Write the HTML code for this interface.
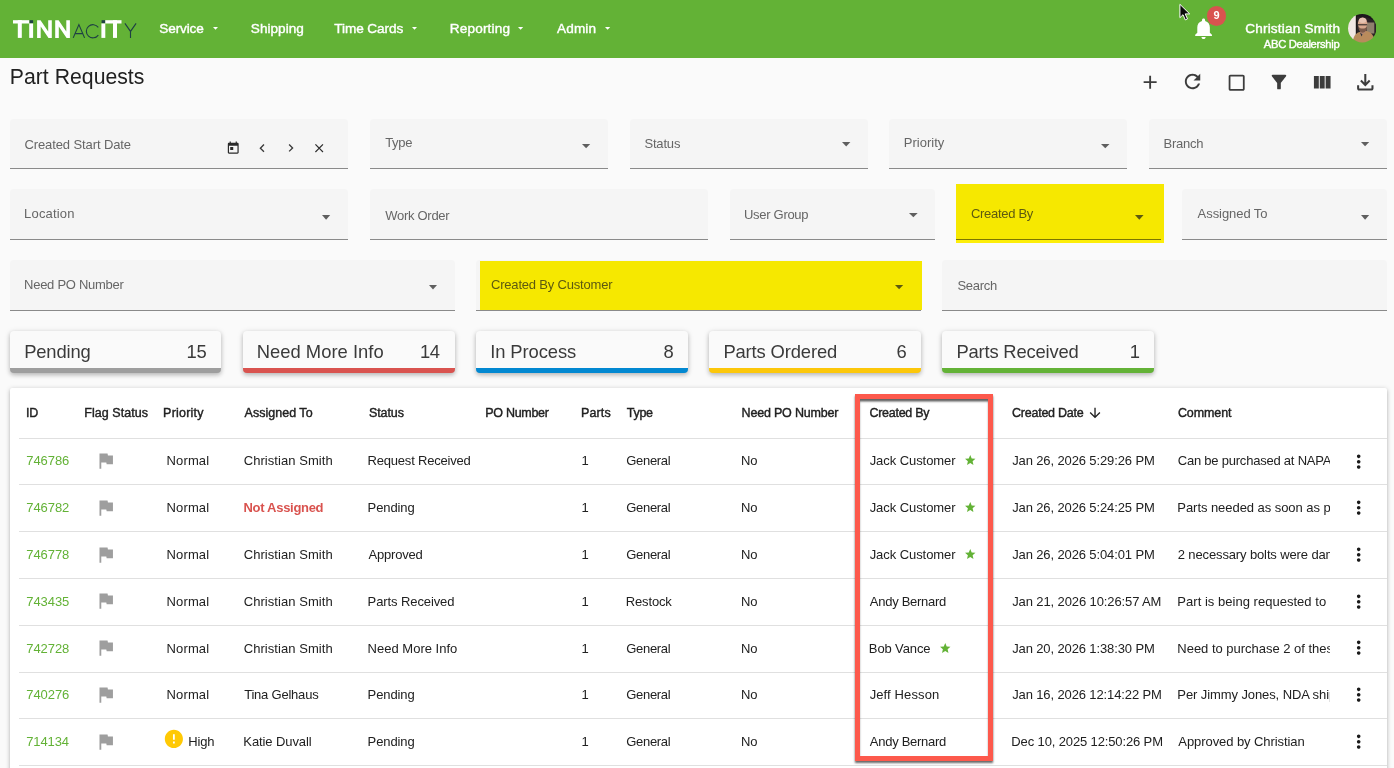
<!DOCTYPE html>
<html><head><meta charset="utf-8"><title>Part Requests</title>
<style>
html,body{margin:0;padding:0;}
body{width:1394px;height:768px;overflow:hidden;position:relative;background:#fafafa;font-family:"Liberation Sans",sans-serif;}
.b{position:absolute;display:block;}
.t{position:absolute;white-space:nowrap;line-height:20px;height:20px;}
</style></head><body>
<div class="b" style="left:0px;top:0px;width:1394px;height:58px;background:#63b236;"></div>
<svg class="b" style="left:0.00px;top:0.00px;" width="150.00" height="58.00" viewBox="0 0 150 58">
<g fill="#fff">
<rect x="13" y="20.2" width="16.3" height="3.3"/><rect x="17.8" y="20.2" width="4" height="17.7"/>
<rect x="29.2" y="23.4" width="3.9" height="14.5"/>
<path d="M37.1 37.9V20.2h3.4l7.7 11.3V20.2h3.6v17.7h-3.3l-7.8-11.4v11.4z"/>
<path d="M55.2 37.9V20.2h3.4l7.7 11.3V20.2h3.6v17.7h-3.3l-7.8-11.4v11.4z"/>
<rect x="101.4" y="23.4" width="3.9" height="14.5"/>
<rect x="105.2" y="20.2" width="16.3" height="3.3"/><rect x="113" y="20.2" width="4" height="17.7"/>
</g>
<g fill="#1f4044"><rect x="29.6" y="20.2" width="3.5" height="2.9"/><rect x="101.6" y="20.2" width="3.5" height="2.9"/></g>
<g fill="none" stroke="#1f4044" stroke-width="1.12" stroke-linecap="butt">
<path d="M73.2 37.9L78.9 24.6L84.6 37.9M75.3 33.6H82.5"/>
<path d="M98.3 27.4A6.6 6.6 0 1 0 98.3 35.1"/>
<path d="M124.9 23.4L130.5 31.4L136.1 23.4M130.5 31.4V37.9"/>
</g></svg>
<svg class="b" style="left:211.50px;top:26.00px;" width="7.00" height="6.00" viewBox="211.5 26 7.0 6"><path fill="#fff" d="M212.5 27L217.5 27L215.0 29.7Z"/></svg>
<svg class="b" style="left:410.75px;top:26.00px;" width="7.00" height="6.00" viewBox="410.75 26 7.0 6"><path fill="#fff" d="M411.75 27L416.75 27L414.25 29.7Z"/></svg>
<svg class="b" style="left:517.20px;top:26.00px;" width="7.20" height="6.00" viewBox="517.2 26 7.199999999999932 6"><path fill="#fff" d="M518.2 27L523.4 27L520.8 29.799999999999965Z"/></svg>
<svg class="b" style="left:603.50px;top:26.00px;" width="7.20" height="6.00" viewBox="603.5 26 7.2000000000000455 6"><path fill="#fff" d="M604.5 27L609.7 27L607.1 29.800000000000022Z"/></svg>
<svg class="b" style="left:1176.00px;top:0.00px;" width="20.00" height="26.00" viewBox="0 0 20 26"><path d="M3.9 4.3v13.4l3.1-3 2.3 5.2 2.2-1-2.3-5h4.5z" fill="#0a0a0a" stroke="#fff" stroke-width="1" stroke-linejoin="round"/></svg>
<svg class="b" style="left:1191.02px;top:16.16px;" width="25.15" height="25.15" viewBox="0 0 24 24"><path fill="#fff" d="M12 22c1.1 0 2-.9 2-2h-4c0 1.1.89 2 2 2zm6-6v-5c0-3.07-1.64-5.64-4.5-6.32V4c0-.83-.67-1.5-1.5-1.5s-1.5.67-1.5 1.5v.68C7.63 5.36 6 7.92 6 11v5l-2 2v1h16v-1l-2-2z"/></svg>
<div class="b" style="left:1206.7px;top:6.2px;width:19.5px;height:19.5px;border-radius:50%;background:#d9534f;"></div>
<svg class="b" style="left:1347.65px;top:14.20px;" width="28.50" height="28.50" viewBox="0 0 28.5 28.5"><defs><clipPath id="avc"><circle cx="14.25" cy="14.25" r="14.2"/></clipPath>
<filter id="avb" x="-10%" y="-10%" width="120%" height="120%"><feGaussianBlur stdDeviation="0.55"/></filter></defs>
<g clip-path="url(#avc)"><g filter="url(#avb)">
<rect x="-2" y="-2" width="33" height="33" fill="#2b2326"/>
<rect x="-2" y="-2" width="10.300" height="33" fill="#f1e7e3"/>
<rect x="7.800" y="-2" width="1.200" height="33" fill="#1c1618"/>
<rect x="18.500" y="8.500" width="7.800" height="11" fill="#8f7f6c"/>
<path d="M8 -1L30 -1L30 8L19 3.500L9 2.500z" fill="#1d181b"/>
<path d="M4.800 30C4.800 22.500 7.500 19 12.500 17.800L17.500 16.800C23 18 26.600 21 27 30z" fill="#b98b5c"/>
<path d="M11.300 16.500L13.500 22.500L15.500 18.500z" fill="#2a3040"/>
<path d="M12 14h5.500v4.500l-2.700 2.200-2.800-2.200z" fill="#b5866e"/>
<ellipse cx="14.600" cy="9.900" rx="4.700" ry="6.300" fill="#d7a68d"/>
<ellipse cx="14.600" cy="6.300" rx="3.800" ry="2.600" fill="#e6c3b2"/>
<path d="M10.300 12.500c.2 4 2 6.200 4.300 6.200s4.200-2.200 4.400-6.200c-1.300 1.600-2.700 2.100-4.400 2.100s-3-.5-4.300-2.100z" fill="#7b5a4b"/>
<rect x="10" y="10.200" width="9.200" height="1.150" fill="#3a2e2c"/>
</g></g></svg>
<svg class="b" style="left:1138.56px;top:70.96px;" width="22.29" height="22.29" viewBox="0 0 24 24"><path fill="#3c3c3c" d="M19 13h-6v6h-2v-6H5v-2h6V5h2v6h6v2z"/></svg>
<svg class="b" style="left:1181.15px;top:70.35px;" width="23.10" height="23.10" viewBox="0 0 24 24"><path fill="#3c3c3c" d="M17.65 6.35C16.2 4.9 14.21 4 12 4c-4.42 0-7.99 3.58-7.99 8s3.57 8 7.99 8c3.73 0 6.84-2.55 7.73-6h-2.08c-.82 2.33-3.04 4-5.65 4-3.31 0-6-2.69-6-6s2.69-6 6-6c1.66 0 3.14.69 4.22 1.78L13 11h7V4l-2.35 2.35z"/></svg>
<svg class="b" style="left:1225.63px;top:71.73px;" width="21.33" height="21.33" viewBox="0 0 24 24"><path fill="#3c3c3c" d="M19 5v14H5V5h14m0-2H5c-1.1 0-2 .9-2 2v14c0 1.1.9 2 2 2h14c1.1 0 2-.9 2-2V5c0-1.1-.9-2-2-2z"/></svg>
<svg class="b" style="left:1268.01px;top:71.16px;" width="21.97" height="21.97" viewBox="0 0 24 24"><path fill="#3c3c3c" d="M4.25 5.61C6.27 8.2 10 13 10 13v6c0 .55.45 1 1 1h2c.55 0 1-.45 1-1v-6s3.72-4.8 5.74-7.39c.51-.66.04-1.61-.79-1.61H5.04c-.83 0-1.3.95-.79 1.61z"/></svg>
<svg class="b" style="left:1310.17px;top:71.24px;" width="23.49" height="23.49" viewBox="0 0 24 24"><path fill="#3c3c3c" d="M10 18h5V5h-5v13zm-6 0h5V5H4v13zM16 5v13h5V5h-5z"/></svg>
<svg class="b" style="left:1353.20px;top:69.80px;" width="24.60" height="24.60" viewBox="0 0 24 24"><path fill="#3c3c3c" d="M18 15v3H6v-3H4v3c0 1.1.9 2 2 2h12c1.1 0 2-.9 2-2v-3h-2zm-1-4l-1.41-1.41L13 12.17V4h-2v8.17L8.41 9.59 7 11l5 5 5-5z"/></svg>
<div class="b" style="left:10px;top:119px;width:338px;height:50px;background:#f5f5f5;border-radius:4px 4px 0 0;border-bottom:1px solid #8a8a8a;box-sizing:border-box;"></div>
<div class="b" style="left:370px;top:119px;width:238px;height:50px;background:#f5f5f5;border-radius:4px 4px 0 0;border-bottom:1px solid #8a8a8a;box-sizing:border-box;"></div>
<div class="b" style="left:630px;top:119px;width:238px;height:50px;background:#f5f5f5;border-radius:4px 4px 0 0;border-bottom:1px solid #8a8a8a;box-sizing:border-box;"></div>
<div class="b" style="left:889px;top:119px;width:238px;height:50px;background:#f5f5f5;border-radius:4px 4px 0 0;border-bottom:1px solid #8a8a8a;box-sizing:border-box;"></div>
<div class="b" style="left:1149px;top:119px;width:238px;height:50px;background:#f5f5f5;border-radius:4px 4px 0 0;border-bottom:1px solid #8a8a8a;box-sizing:border-box;"></div>
<div class="b" style="left:10px;top:189px;width:338px;height:51px;background:#f5f5f5;border-radius:4px 4px 0 0;border-bottom:1px solid #8a8a8a;box-sizing:border-box;"></div>
<div class="b" style="left:370px;top:189px;width:338px;height:51px;background:#f5f5f5;border-radius:4px 4px 0 0;border-bottom:1px solid #8a8a8a;box-sizing:border-box;"></div>
<div class="b" style="left:730px;top:189px;width:205px;height:51px;background:#f5f5f5;border-radius:4px 4px 0 0;border-bottom:1px solid #8a8a8a;box-sizing:border-box;"></div>
<div class="b" style="left:956px;top:184px;width:208px;height:59px;background:#f6e800;"></div>
<div class="b" style="left:956px;top:239px;width:205px;height:1px;background:#7c7500;"></div>
<div class="b" style="left:956px;top:240px;width:208px;height:3px;background:#fdee0a;"></div>
<div class="b" style="left:1182px;top:189px;width:205px;height:51px;background:#f5f5f5;border-radius:4px 4px 0 0;border-bottom:1px solid #8a8a8a;box-sizing:border-box;"></div>
<div class="b" style="left:10px;top:260px;width:445px;height:51px;background:#f5f5f5;border-radius:4px 4px 0 0;border-bottom:1px solid #8a8a8a;box-sizing:border-box;"></div>
<div class="b" style="left:476px;top:260px;width:445px;height:51px;background:#f5f5f5;border-radius:4px 4px 0 0;border-bottom:1px solid #8a8a8a;box-sizing:border-box;"></div>
<div class="b" style="left:480px;top:261px;width:442px;height:49px;background:#f6e800;"></div>
<div class="b" style="left:942px;top:260px;width:445px;height:51px;background:#f5f5f5;border-radius:4px 4px 0 0;border-bottom:1px solid #8a8a8a;box-sizing:border-box;"></div>
<svg class="b" style="left:225.76px;top:140.62px;" width="14.47" height="14.47" viewBox="0 0 24 24"><path fill="#2a2a2a" d="M19 3h-1V1h-2v2H8V1H6v2H5c-1.11 0-1.99.9-1.99 2L3 19c0 1.1.89 2 2 2h14c1.1 0 2-.9 2-2V5c0-1.1-.9-2-2-2zm0 16H5V8h14v11zM7 10h5v5H7z"/></svg>
<svg class="b" style="left:253.91px;top:139.91px;" width="16.28" height="16.28" viewBox="0 0 24 24"><path fill="#3a3a3a" d="M15.41 7.41L14 6l-6 6 6 6 1.41-1.41L10.83 12z"/></svg>
<svg class="b" style="left:283.21px;top:140.15px;" width="15.80" height="15.80" viewBox="0 0 24 24"><path fill="#3a3a3a" d="M10 6L8.59 7.41 13.17 12l-4.58 4.59L10 18l6-6z"/></svg>
<svg class="b" style="left:312.00px;top:140.70px;" width="14.40" height="14.40" viewBox="0 0 24 24"><path fill="#2e2e2e" d="M19 6.41L17.59 5 12 10.59 6.41 5 5 6.41 10.59 12 5 17.59 6.41 19 12 13.41 17.59 19 19 17.59 13.41 12z"/></svg>
<svg class="b" style="left:580.80px;top:142.80px;" width="10.20" height="6.20" viewBox="580.8 142.8 10.200000000000045 6.199999999999989"><path fill="#5f5f5f" d="M581.8 143.8H590L585.9 148Z"/></svg>
<svg class="b" style="left:840.80px;top:140.80px;" width="10.40" height="6.40" viewBox="840.8 140.8 10.400000000000091 6.399999999999977"><path fill="#5f5f5f" d="M841.8 141.8H850.2L846.0 146.2Z"/></svg>
<svg class="b" style="left:1100.00px;top:142.80px;" width="10.50" height="6.20" viewBox="1100 142.8 10.5 6.199999999999989"><path fill="#5f5f5f" d="M1101 143.8H1109.5L1105.25 148Z"/></svg>
<svg class="b" style="left:1359.80px;top:141.00px;" width="10.20" height="6.20" viewBox="1359.8 141 10.200000000000045 6.199999999999989"><path fill="#5f5f5f" d="M1360.8 142H1369L1364.9 146.2Z"/></svg>
<svg class="b" style="left:320.80px;top:213.80px;" width="10.20" height="6.70" viewBox="320.8 213.8 10.199999999999989 6.699999999999989"><path fill="#5f5f5f" d="M321.8 214.8H330L325.9 219.5Z"/></svg>
<svg class="b" style="left:907.50px;top:212.00px;" width="10.70" height="6.30" viewBox="907.5 212 10.700000000000045 6.300000000000011"><path fill="#5f5f5f" d="M908.5 213H917.2L912.85 217.3Z"/></svg>
<svg class="b" style="left:1133.60px;top:213.80px;" width="10.60" height="6.70" viewBox="1133.6 213.8 10.600000000000136 6.699999999999989"><path fill="#5d5a10" d="M1134.6 214.8H1143.2L1138.9 219.5Z"/></svg>
<svg class="b" style="left:1359.80px;top:213.80px;" width="10.20" height="6.70" viewBox="1359.8 213.8 10.200000000000045 6.699999999999989"><path fill="#5f5f5f" d="M1360.8 214.8H1369L1364.9 219.5Z"/></svg>
<svg class="b" style="left:428.30px;top:283.50px;" width="10.00" height="6.50" viewBox="428.3 283.5 10.0 6.5"><path fill="#5f5f5f" d="M429.3 284.5H437.3L433.3 289Z"/></svg>
<svg class="b" style="left:893.80px;top:283.80px;" width="10.20" height="6.20" viewBox="893.8 283.8 10.200000000000045 6.199999999999989"><path fill="#5d5a10" d="M894.8 284.8H903L898.9 289Z"/></svg>
<div class="b" style="left:10px;top:331px;width:211px;height:41.5px;background:#fafafa;border-radius:4px;border-bottom:5px solid #9e9e9e;box-sizing:border-box;box-shadow:0 2px 4px rgba(0,0,0,.2),0 1px 6px rgba(0,0,0,.12);"></div>
<div class="b" style="left:243px;top:331px;width:212px;height:41.5px;background:#fafafa;border-radius:4px;border-bottom:5px solid #d9534f;box-sizing:border-box;box-shadow:0 2px 4px rgba(0,0,0,.2),0 1px 6px rgba(0,0,0,.12);"></div>
<div class="b" style="left:476px;top:331px;width:212px;height:41.5px;background:#fafafa;border-radius:4px;border-bottom:5px solid #0288d1;box-sizing:border-box;box-shadow:0 2px 4px rgba(0,0,0,.2),0 1px 6px rgba(0,0,0,.12);"></div>
<div class="b" style="left:709px;top:331px;width:212px;height:41.5px;background:#fafafa;border-radius:4px;border-bottom:5px solid #fcc70a;box-sizing:border-box;box-shadow:0 2px 4px rgba(0,0,0,.2),0 1px 6px rgba(0,0,0,.12);"></div>
<div class="b" style="left:942px;top:331px;width:212px;height:41.5px;background:#fafafa;border-radius:4px;border-bottom:5px solid #63b236;box-sizing:border-box;box-shadow:0 2px 4px rgba(0,0,0,.2),0 1px 6px rgba(0,0,0,.12);"></div>
<div class="b" style="left:10px;top:388px;width:1377px;height:412px;background:#fff;border-radius:2px 2px 0 0;box-shadow:0 1px 5px rgba(0,0,0,.22),0 2px 3px rgba(0,0,0,.12);"></div>
<div class="b" style="left:19px;top:438px;width:1368px;height:1px;background:#e0e0e0;"></div>
<div class="b" style="left:19px;top:484px;width:1368px;height:1px;background:#e0e0e0;"></div>
<div class="b" style="left:19px;top:531px;width:1368px;height:1px;background:#e0e0e0;"></div>
<div class="b" style="left:19px;top:578px;width:1368px;height:1px;background:#e0e0e0;"></div>
<div class="b" style="left:19px;top:625px;width:1368px;height:1px;background:#e0e0e0;"></div>
<div class="b" style="left:19px;top:672px;width:1368px;height:1px;background:#e0e0e0;"></div>
<div class="b" style="left:19px;top:718px;width:1368px;height:1px;background:#e0e0e0;"></div>
<div class="b" style="left:19px;top:765px;width:1368px;height:1px;background:#e0e0e0;"></div>
<svg class="b" style="left:1087.27px;top:404.78px;" width="16.05" height="16.05" viewBox="0 0 24 24"><path fill="#212121" d="M20 12l-1.41-1.41L13 16.17V4h-2v12.17l-5.58-5.59L4 12l8 8 8-8z"/></svg>
<svg class="b" style="left:94.88px;top:450.43px;" width="21.54" height="21.54" viewBox="0 0 24 24"><path fill="#9e9e9e" d="M14.4 6L14 4H5v17h2v-7h5.6l.4 2h7V6z"/></svg>
<svg class="b" style="left:1347.85px;top:450.60px;" width="21.40" height="21.40" viewBox="0 0 24 24"><path fill="#1a1a1a" d="M12 8c1.1 0 2-.9 2-2s-.9-2-2-2-2 .9-2 2 .9 2 2 2zm0 2c-1.1 0-2 .9-2 2s.9 2 2 2 2-.9 2-2-.9-2-2-2zm0 6c-1.1 0-2 .9-2 2s.9 2 2 2 2-.9 2-2-.9-2-2-2z"/></svg>
<svg class="b" style="left:964.31px;top:454.32px;" width="12.49" height="12.49" viewBox="0 0 24 24"><path fill="#63b236" d="M12 17.27L18.18 21l-1.64-7.03L22 9.24l-7.19-.61L12 2 9.19 8.63 2 9.24l5.46 4.73L5.82 21z"/></svg>
<svg class="b" style="left:94.88px;top:497.11px;" width="21.54" height="21.54" viewBox="0 0 24 24"><path fill="#9e9e9e" d="M14.4 6L14 4H5v17h2v-7h5.6l.4 2h7V6z"/></svg>
<svg class="b" style="left:1347.85px;top:497.28px;" width="21.40" height="21.40" viewBox="0 0 24 24"><path fill="#1a1a1a" d="M12 8c1.1 0 2-.9 2-2s-.9-2-2-2-2 .9-2 2 .9 2 2 2zm0 2c-1.1 0-2 .9-2 2s.9 2 2 2 2-.9 2-2-.9-2-2-2zm0 6c-1.1 0-2 .9-2 2s.9 2 2 2 2-.9 2-2-.9-2-2-2z"/></svg>
<svg class="b" style="left:964.31px;top:501.32px;" width="12.49" height="12.49" viewBox="0 0 24 24"><path fill="#63b236" d="M12 17.27L18.18 21l-1.64-7.03L22 9.24l-7.19-.61L12 2 9.19 8.63 2 9.24l5.46 4.73L5.82 21z"/></svg>
<svg class="b" style="left:94.88px;top:543.79px;" width="21.54" height="21.54" viewBox="0 0 24 24"><path fill="#9e9e9e" d="M14.4 6L14 4H5v17h2v-7h5.6l.4 2h7V6z"/></svg>
<svg class="b" style="left:1347.85px;top:543.96px;" width="21.40" height="21.40" viewBox="0 0 24 24"><path fill="#1a1a1a" d="M12 8c1.1 0 2-.9 2-2s-.9-2-2-2-2 .9-2 2 .9 2 2 2zm0 2c-1.1 0-2 .9-2 2s.9 2 2 2 2-.9 2-2-.9-2-2-2zm0 6c-1.1 0-2 .9-2 2s.9 2 2 2 2-.9 2-2-.9-2-2-2z"/></svg>
<svg class="b" style="left:964.31px;top:548.32px;" width="12.49" height="12.49" viewBox="0 0 24 24"><path fill="#63b236" d="M12 17.27L18.18 21l-1.64-7.03L22 9.24l-7.19-.61L12 2 9.19 8.63 2 9.24l5.46 4.73L5.82 21z"/></svg>
<svg class="b" style="left:94.88px;top:590.47px;" width="21.54" height="21.54" viewBox="0 0 24 24"><path fill="#9e9e9e" d="M14.4 6L14 4H5v17h2v-7h5.6l.4 2h7V6z"/></svg>
<svg class="b" style="left:1347.85px;top:590.64px;" width="21.40" height="21.40" viewBox="0 0 24 24"><path fill="#1a1a1a" d="M12 8c1.1 0 2-.9 2-2s-.9-2-2-2-2 .9-2 2 .9 2 2 2zm0 2c-1.1 0-2 .9-2 2s.9 2 2 2 2-.9 2-2-.9-2-2-2zm0 6c-1.1 0-2 .9-2 2s.9 2 2 2 2-.9 2-2-.9-2-2-2z"/></svg>
<svg class="b" style="left:94.88px;top:637.15px;" width="21.54" height="21.54" viewBox="0 0 24 24"><path fill="#9e9e9e" d="M14.4 6L14 4H5v17h2v-7h5.6l.4 2h7V6z"/></svg>
<svg class="b" style="left:1347.85px;top:637.32px;" width="21.40" height="21.40" viewBox="0 0 24 24"><path fill="#1a1a1a" d="M12 8c1.1 0 2-.9 2-2s-.9-2-2-2-2 .9-2 2 .9 2 2 2zm0 2c-1.1 0-2 .9-2 2s.9 2 2 2 2-.9 2-2-.9-2-2-2zm0 6c-1.1 0-2 .9-2 2s.9 2 2 2 2-.9 2-2-.9-2-2-2z"/></svg>
<svg class="b" style="left:938.81px;top:642.32px;" width="12.49" height="12.49" viewBox="0 0 24 24"><path fill="#63b236" d="M12 17.27L18.18 21l-1.64-7.03L22 9.24l-7.19-.61L12 2 9.19 8.63 2 9.24l5.46 4.73L5.82 21z"/></svg>
<svg class="b" style="left:94.88px;top:683.83px;" width="21.54" height="21.54" viewBox="0 0 24 24"><path fill="#9e9e9e" d="M14.4 6L14 4H5v17h2v-7h5.6l.4 2h7V6z"/></svg>
<svg class="b" style="left:1347.85px;top:684.00px;" width="21.40" height="21.40" viewBox="0 0 24 24"><path fill="#1a1a1a" d="M12 8c1.1 0 2-.9 2-2s-.9-2-2-2-2 .9-2 2 .9 2 2 2zm0 2c-1.1 0-2 .9-2 2s.9 2 2 2 2-.9 2-2-.9-2-2-2zm0 6c-1.1 0-2 .9-2 2s.9 2 2 2 2-.9 2-2-.9-2-2-2z"/></svg>
<svg class="b" style="left:94.88px;top:730.51px;" width="21.54" height="21.54" viewBox="0 0 24 24"><path fill="#9e9e9e" d="M14.4 6L14 4H5v17h2v-7h5.6l.4 2h7V6z"/></svg>
<svg class="b" style="left:1347.85px;top:730.68px;" width="21.40" height="21.40" viewBox="0 0 24 24"><path fill="#1a1a1a" d="M12 8c1.1 0 2-.9 2-2s-.9-2-2-2-2 .9-2 2 .9 2 2 2zm0 2c-1.1 0-2 .9-2 2s.9 2 2 2 2-.9 2-2-.9-2-2-2zm0 6c-1.1 0-2 .9-2 2s.9 2 2 2 2-.9 2-2-.9-2-2-2z"/></svg>
<svg class="b" style="left:162.96px;top:728.21px;" width="21.78" height="21.78" viewBox="0 0 24 24"><path fill="#ffc905" d="M12 2C6.48 2 2 6.48 2 12s4.48 10 10 10 10-4.48 10-10S17.52 2 12 2zm1 15h-2v-2h2v2zm0-4h-2V7h2v6z"/></svg>
<div class="b" style="left:0;top:0;width:1394px;height:768px;will-change:transform;">
<div class="t" style="left:159.37px;top:19.00px;font-size:13.6px;letter-spacing:-0.145px;color:#fff;-webkit-text-stroke:0.4px #fff;">Service</div>
<div class="t" style="left:250.87px;top:19.00px;font-size:13.6px;letter-spacing:0.001px;color:#fff;-webkit-text-stroke:0.4px #fff;">Shipping</div>
<div class="t" style="left:334.34px;top:19.00px;font-size:13.6px;letter-spacing:-0.098px;color:#fff;-webkit-text-stroke:0.4px #fff;">Time Cards</div>
<div class="t" style="left:449.74px;top:19.00px;font-size:13.6px;letter-spacing:0.170px;color:#fff;-webkit-text-stroke:0.4px #fff;">Reporting</div>
<div class="t" style="left:557.05px;top:19.00px;font-size:13.6px;letter-spacing:0.116px;color:#fff;-webkit-text-stroke:0.4px #fff;">Admin</div>
<div class="t" style="left:1245.16px;top:19.00px;font-size:13.6px;letter-spacing:0.193px;color:#fff;-webkit-text-stroke:0.4px #fff;">Christian Smith</div>
<div class="t" style="left:1263.80px;top:34.00px;font-size:11.2px;letter-spacing:-0.287px;color:#fff;-webkit-text-stroke:0.4px #fff;">ABC Dealership</div>
<div class="t" style="left:1213.46px;top:5.00px;font-size:11px;letter-spacing:0.000px;color:#fff;font-weight:bold;">9</div>
<div class="t" style="left:9.84px;top:67.00px;font-size:21.2px;letter-spacing:0.024px;color:#212121;">Part Requests</div>
<div class="t" style="left:24.49px;top:135.00px;font-size:13px;letter-spacing:-0.109px;color:#666666;">Created Start Date</div>
<div class="t" style="left:385.15px;top:133.00px;font-size:13px;letter-spacing:-0.300px;color:#666666;">Type</div>
<div class="t" style="left:644.44px;top:134.00px;font-size:13px;letter-spacing:-0.178px;color:#666666;">Status</div>
<div class="t" style="left:903.83px;top:133.00px;font-size:13px;letter-spacing:-0.005px;color:#666666;">Priority</div>
<div class="t" style="left:1163.58px;top:134.00px;font-size:13px;letter-spacing:-0.259px;color:#666666;">Branch</div>
<div class="t" style="left:24.08px;top:204.00px;font-size:13px;letter-spacing:0.178px;color:#666666;">Location</div>
<div class="t" style="left:385.35px;top:206.00px;font-size:13px;letter-spacing:-0.300px;color:#666666;">Work Order</div>
<div class="t" style="left:744.04px;top:205.00px;font-size:13px;letter-spacing:-0.300px;color:#666666;">User Group</div>
<div class="t" style="left:970.99px;top:204.00px;font-size:13px;letter-spacing:-0.300px;color:#5d5a10;">Created By</div>
<div class="t" style="left:1197.60px;top:204.00px;font-size:13px;letter-spacing:-0.064px;color:#666666;">Assigned To</div>
<div class="t" style="left:24.08px;top:275.00px;font-size:13px;letter-spacing:-0.276px;color:#666666;">Need PO Number</div>
<div class="t" style="left:490.99px;top:275.00px;font-size:13px;letter-spacing:-0.190px;color:#5d5a10;">Created By Customer</div>
<div class="t" style="left:957.44px;top:276.00px;font-size:13px;letter-spacing:-0.300px;color:#666666;">Search</div>
<div class="t" style="left:24.16px;top:342.00px;font-size:18.4px;letter-spacing:-0.143px;color:#3a3a3a;">Pending</div>
<div class="t" style="left:186.45px;top:342.00px;font-size:18.4px;letter-spacing:-0.171px;color:#3a3a3a;">15</div>
<div class="t" style="left:256.66px;top:342.00px;font-size:18.4px;letter-spacing:0.020px;color:#3a3a3a;">Need More Info</div>
<div class="t" style="left:419.95px;top:342.00px;font-size:18.4px;letter-spacing:-0.300px;color:#3a3a3a;">14</div>
<div class="t" style="left:490.16px;top:342.00px;font-size:18.4px;letter-spacing:-0.085px;color:#3a3a3a;">In Process</div>
<div class="t" style="left:663.53px;top:342.00px;font-size:18.4px;letter-spacing:0.000px;color:#3a3a3a;">8</div>
<div class="t" style="left:723.41px;top:342.00px;font-size:18.4px;letter-spacing:-0.141px;color:#3a3a3a;">Parts Ordered</div>
<div class="t" style="left:896.49px;top:342.00px;font-size:18.4px;letter-spacing:0.000px;color:#3a3a3a;">6</div>
<div class="t" style="left:956.41px;top:342.00px;font-size:18.4px;letter-spacing:-0.184px;color:#3a3a3a;">Parts Received</div>
<div class="t" style="left:1129.70px;top:342.00px;font-size:18.4px;letter-spacing:0.000px;color:#3a3a3a;">1</div>
<div class="t" style="left:26.07px;top:403.00px;font-size:12.5px;letter-spacing:-0.300px;color:#212121;-webkit-text-stroke:0.4px #212121;">ID</div>
<div class="t" style="left:84.32px;top:403.00px;font-size:12.5px;letter-spacing:0.039px;color:#212121;-webkit-text-stroke:0.4px #212121;">Flag Status</div>
<div class="t" style="left:163.07px;top:403.00px;font-size:12.5px;letter-spacing:0.226px;color:#212121;-webkit-text-stroke:0.4px #212121;">Priority</div>
<div class="t" style="left:244.55px;top:403.00px;font-size:12.5px;letter-spacing:0.016px;color:#212121;-webkit-text-stroke:0.4px #212121;">Assigned To</div>
<div class="t" style="left:368.91px;top:403.00px;font-size:12.5px;letter-spacing:-0.081px;color:#212121;-webkit-text-stroke:0.4px #212121;">Status</div>
<div class="t" style="left:485.32px;top:403.00px;font-size:12.5px;letter-spacing:-0.300px;color:#212121;-webkit-text-stroke:0.4px #212121;">PO Number</div>
<div class="t" style="left:581.07px;top:403.00px;font-size:12.5px;letter-spacing:0.111px;color:#212121;-webkit-text-stroke:0.4px #212121;">Parts</div>
<div class="t" style="left:626.85px;top:403.00px;font-size:12.5px;letter-spacing:-0.300px;color:#212121;-webkit-text-stroke:0.4px #212121;">Type</div>
<div class="t" style="left:741.57px;top:403.00px;font-size:12.5px;letter-spacing:-0.197px;color:#212121;-webkit-text-stroke:0.4px #212121;">Need PO Number</div>
<div class="t" style="left:869.46px;top:403.00px;font-size:12.5px;letter-spacing:-0.272px;color:#212121;-webkit-text-stroke:0.4px #212121;">Created By</div>
<div class="t" style="left:1011.96px;top:403.00px;font-size:12.5px;letter-spacing:-0.228px;color:#212121;-webkit-text-stroke:0.4px #212121;">Created Date</div>
<div class="t" style="left:1177.96px;top:403.00px;font-size:12.5px;letter-spacing:-0.106px;color:#212121;-webkit-text-stroke:0.4px #212121;">Comment</div>
<div class="t" style="left:26.24px;top:451.00px;font-size:13px;letter-spacing:-0.069px;color:#63b236;">746786</div>
<div class="t" style="left:166.58px;top:451.00px;font-size:13px;letter-spacing:0.126px;color:#212121;">Normal</div>
<div class="t" style="left:243.74px;top:451.00px;font-size:13px;letter-spacing:0.061px;color:#212121;">Christian Smith</div>
<div class="t" style="left:367.58px;top:451.00px;font-size:13px;letter-spacing:-0.205px;color:#212121;">Request Received</div>
<div class="t" style="left:581.54px;top:451.00px;font-size:13px;letter-spacing:0.000px;color:#212121;">1</div>
<div class="t" style="left:626.24px;top:451.00px;font-size:13px;letter-spacing:-0.300px;color:#212121;">General</div>
<div class="t" style="left:741.08px;top:451.00px;font-size:13px;letter-spacing:-0.300px;color:#212121;">No</div>
<div class="t" style="left:869.65px;top:451.00px;font-size:13px;letter-spacing:-0.064px;color:#212121;">Jack Customer</div>
<div class="t" style="left:1012.15px;top:451.00px;font-size:13px;letter-spacing:-0.120px;color:#212121;">Jan 26, 2026 5:29:26 PM</div>
<div class="t" style="left:1177.74px;top:451.00px;font-size:13px;letter-spacing:-0.220px;color:#212121;width:152.06px;overflow:hidden;">Can be purchased at NAPA Auto Parts</div>
<div class="t" style="left:26.24px;top:498.00px;font-size:13px;letter-spacing:-0.069px;color:#63b236;">746782</div>
<div class="t" style="left:166.58px;top:498.00px;font-size:13px;letter-spacing:0.126px;color:#212121;">Normal</div>
<div class="t" style="left:243.54px;top:498.00px;font-size:13px;letter-spacing:-0.300px;color:#d9534f;font-weight:bold;">Not Assigned</div>
<div class="t" style="left:367.58px;top:498.00px;font-size:13px;letter-spacing:-0.111px;color:#212121;">Pending</div>
<div class="t" style="left:581.54px;top:498.00px;font-size:13px;letter-spacing:0.000px;color:#212121;">1</div>
<div class="t" style="left:626.24px;top:498.00px;font-size:13px;letter-spacing:-0.300px;color:#212121;">General</div>
<div class="t" style="left:741.08px;top:498.00px;font-size:13px;letter-spacing:-0.300px;color:#212121;">No</div>
<div class="t" style="left:869.65px;top:498.00px;font-size:13px;letter-spacing:-0.064px;color:#212121;">Jack Customer</div>
<div class="t" style="left:1012.15px;top:498.00px;font-size:13px;letter-spacing:-0.120px;color:#212121;">Jan 26, 2026 5:24:25 PM</div>
<div class="t" style="left:1177.33px;top:498.00px;font-size:13px;letter-spacing:-0.057px;color:#212121;width:152.47px;overflow:hidden;">Parts needed as soon as possible</div>
<div class="t" style="left:26.24px;top:545.00px;font-size:13px;letter-spacing:-0.069px;color:#63b236;">746778</div>
<div class="t" style="left:166.58px;top:545.00px;font-size:13px;letter-spacing:0.126px;color:#212121;">Normal</div>
<div class="t" style="left:243.74px;top:545.00px;font-size:13px;letter-spacing:0.061px;color:#212121;">Christian Smith</div>
<div class="t" style="left:368.60px;top:545.00px;font-size:13px;letter-spacing:-0.217px;color:#212121;">Approved</div>
<div class="t" style="left:581.54px;top:545.00px;font-size:13px;letter-spacing:0.000px;color:#212121;">1</div>
<div class="t" style="left:626.24px;top:545.00px;font-size:13px;letter-spacing:-0.300px;color:#212121;">General</div>
<div class="t" style="left:741.08px;top:545.00px;font-size:13px;letter-spacing:-0.300px;color:#212121;">No</div>
<div class="t" style="left:869.65px;top:545.00px;font-size:13px;letter-spacing:-0.064px;color:#212121;">Jack Customer</div>
<div class="t" style="left:1012.15px;top:545.00px;font-size:13px;letter-spacing:-0.120px;color:#212121;">Jan 26, 2026 5:04:01 PM</div>
<div class="t" style="left:1177.74px;top:545.00px;font-size:13px;letter-spacing:-0.127px;color:#212121;width:152.06px;overflow:hidden;">2 necessary bolts were damaged</div>
<div class="t" style="left:26.24px;top:592.00px;font-size:13px;letter-spacing:-0.069px;color:#63b236;">743435</div>
<div class="t" style="left:166.58px;top:592.00px;font-size:13px;letter-spacing:0.126px;color:#212121;">Normal</div>
<div class="t" style="left:243.74px;top:592.00px;font-size:13px;letter-spacing:0.061px;color:#212121;">Christian Smith</div>
<div class="t" style="left:367.58px;top:592.00px;font-size:13px;letter-spacing:-0.096px;color:#212121;">Parts Received</div>
<div class="t" style="left:581.54px;top:592.00px;font-size:13px;letter-spacing:0.000px;color:#212121;">1</div>
<div class="t" style="left:625.83px;top:592.00px;font-size:13px;letter-spacing:-0.166px;color:#212121;">Restock</div>
<div class="t" style="left:741.08px;top:592.00px;font-size:13px;letter-spacing:-0.300px;color:#212121;">No</div>
<div class="t" style="left:869.85px;top:592.00px;font-size:13px;letter-spacing:-0.283px;color:#212121;">Andy Bernard</div>
<div class="t" style="left:1012.15px;top:592.00px;font-size:13px;letter-spacing:-0.108px;color:#212121;">Jan 21, 2026 10:26:57 AM</div>
<div class="t" style="left:1177.33px;top:592.00px;font-size:13px;letter-spacing:0.026px;color:#212121;width:152.47px;overflow:hidden;">Part is being requested to</div>
<div class="t" style="left:26.24px;top:639.00px;font-size:13px;letter-spacing:-0.069px;color:#63b236;">742728</div>
<div class="t" style="left:166.58px;top:639.00px;font-size:13px;letter-spacing:0.126px;color:#212121;">Normal</div>
<div class="t" style="left:243.74px;top:639.00px;font-size:13px;letter-spacing:0.061px;color:#212121;">Christian Smith</div>
<div class="t" style="left:367.58px;top:639.00px;font-size:13px;letter-spacing:0.007px;color:#212121;">Need More Info</div>
<div class="t" style="left:581.54px;top:639.00px;font-size:13px;letter-spacing:0.000px;color:#212121;">1</div>
<div class="t" style="left:626.24px;top:639.00px;font-size:13px;letter-spacing:-0.300px;color:#212121;">General</div>
<div class="t" style="left:741.08px;top:639.00px;font-size:13px;letter-spacing:-0.300px;color:#212121;">No</div>
<div class="t" style="left:868.83px;top:639.00px;font-size:13px;letter-spacing:-0.118px;color:#212121;">Bob Vance</div>
<div class="t" style="left:1012.15px;top:639.00px;font-size:13px;letter-spacing:-0.120px;color:#212121;">Jan 20, 2026 1:38:30 PM</div>
<div class="t" style="left:1177.33px;top:639.00px;font-size:13px;letter-spacing:-0.021px;color:#212121;width:152.47px;overflow:hidden;">Need to purchase 2 of these</div>
<div class="t" style="left:26.24px;top:685.00px;font-size:13px;letter-spacing:-0.069px;color:#63b236;">740276</div>
<div class="t" style="left:166.58px;top:685.00px;font-size:13px;letter-spacing:0.126px;color:#212121;">Normal</div>
<div class="t" style="left:244.15px;top:685.00px;font-size:13px;letter-spacing:-0.212px;color:#212121;">Tina Gelhaus</div>
<div class="t" style="left:367.58px;top:685.00px;font-size:13px;letter-spacing:-0.111px;color:#212121;">Pending</div>
<div class="t" style="left:581.54px;top:685.00px;font-size:13px;letter-spacing:0.000px;color:#212121;">1</div>
<div class="t" style="left:626.24px;top:685.00px;font-size:13px;letter-spacing:-0.300px;color:#212121;">General</div>
<div class="t" style="left:741.08px;top:685.00px;font-size:13px;letter-spacing:-0.300px;color:#212121;">No</div>
<div class="t" style="left:869.65px;top:685.00px;font-size:13px;letter-spacing:0.117px;color:#212121;">Jeff Hesson</div>
<div class="t" style="left:1012.15px;top:685.00px;font-size:13px;letter-spacing:-0.121px;color:#212121;">Jan 16, 2026 12:14:22 PM</div>
<div class="t" style="left:1177.33px;top:685.00px;font-size:13px;letter-spacing:-0.094px;color:#212121;width:152.47px;overflow:hidden;">Per Jimmy Jones, NDA shipping</div>
<div class="t" style="left:26.24px;top:732.00px;font-size:13px;letter-spacing:-0.109px;color:#63b236;">714134</div>
<div class="t" style="left:188.33px;top:732.00px;font-size:13px;letter-spacing:-0.197px;color:#212121;">High</div>
<div class="t" style="left:243.33px;top:732.00px;font-size:13px;letter-spacing:-0.100px;color:#212121;">Katie Duvall</div>
<div class="t" style="left:367.58px;top:732.00px;font-size:13px;letter-spacing:-0.111px;color:#212121;">Pending</div>
<div class="t" style="left:581.54px;top:732.00px;font-size:13px;letter-spacing:0.000px;color:#212121;">1</div>
<div class="t" style="left:626.24px;top:732.00px;font-size:13px;letter-spacing:-0.300px;color:#212121;">General</div>
<div class="t" style="left:741.08px;top:732.00px;font-size:13px;letter-spacing:-0.300px;color:#212121;">No</div>
<div class="t" style="left:869.85px;top:732.00px;font-size:13px;letter-spacing:-0.283px;color:#212121;">Andy Bernard</div>
<div class="t" style="left:1011.33px;top:732.00px;font-size:13px;letter-spacing:-0.131px;color:#212121;">Dec 10, 2025 12:50:26 PM</div>
<div class="t" style="left:1178.35px;top:732.00px;font-size:13px;letter-spacing:-0.081px;color:#212121;width:151.45px;overflow:hidden;">Approved by Christian</div>
</div>
<div class="b" style="left:855px;top:394px;width:138px;height:367px;box-sizing:border-box;border:5px solid #fd594c;box-shadow:0 2px 2px rgba(0,0,0,.6), inset 0 3px 2px -0.5px rgba(0,0,0,.62);"></div>
</body></html>
